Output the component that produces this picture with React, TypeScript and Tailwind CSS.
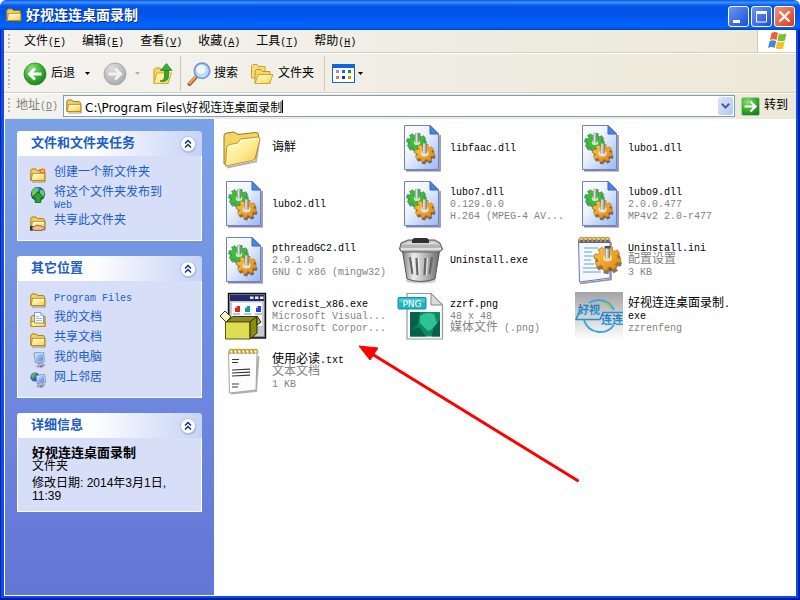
import { ReactNode, useState } from "react";

const gear = (cx: number, cy: number, r: number, teeth = 8, squash = 0.9) => {
  const pts: string[] = [];
  const step = (Math.PI * 2) / teeth;
  for (let i = 0; i < teeth; i++) {
    const a = i * step + 0.2;
    [[-0.34, 0.76], [-0.24, 1], [0.24, 1], [0.34, 0.76]].forEach(([o, k]) => {
      const t = a + o * step;
      pts.push(`${(cx + Math.cos(t) * r * k).toFixed(2)},${(cy + Math.sin(t) * r * k * squash).toFixed(2)}`);
    });
  }
  return pts.join(" ");
};

/* half-width characters are set smaller so that two of them fill one chinese cell */
function Mixed({ text }: { text: string }) {
  const parts = text.split(/([\x20-\x7e]+)/).filter(Boolean);
  return (
    <>
      {parts.map((p, i) =>
        /^[\x20-\x7e]+$/.test(p) ? <span key={i} className="text-[10px] leading-none whitespace-pre-wrap">{p}</span> : p
      )}
    </>
  );
}

function Defs() {
  return (
    <svg className="absolute size-0" aria-hidden="true">
      <defs>
        <linearGradient id="folder" x1="0" y1="0" x2="1" y2="1">
          <stop offset="0" stopColor="#fffbd0" />
          <stop offset="0.5" stopColor="#ffec94" />
          <stop offset="1" stopColor="#f2c94e" />
        </linearGradient>
        <linearGradient id="page" x1="0" y1="0" x2="1" y2="1">
          <stop offset="0" stopColor="#ffffff" />
          <stop offset="0.4" stopColor="#eef4ff" />
          <stop offset="1" stopColor="#98b8f8" />
        </linearGradient>
        <radialGradient id="green" cx="0.35" cy="0.25" r="0.85">
          <stop offset="0" stopColor="#8ee07a" />
          <stop offset="0.5" stopColor="#3cb034" />
          <stop offset="1" stopColor="#157a18" />
        </radialGradient>
        <radialGradient id="grey" cx="0.35" cy="0.25" r="0.9">
          <stop offset="0" stopColor="#dcdcdc" />
          <stop offset="1" stopColor="#a4a4a4" />
        </radialGradient>
        <linearGradient id="metal">
          <stop offset="0" stopColor="#808080" />
          <stop offset="0.3" stopColor="#ececec" />
          <stop offset="0.65" stopColor="#b0b0b0" />
          <stop offset="1" stopColor="#6c6c6c" />
        </linearGradient>
        <linearGradient id="gold" x1="0" y1="0" x2="1" y2="1">
          <stop offset="0" stopColor="#ffc84a" />
          <stop offset="1" stopColor="#dd8510" />
        </linearGradient>
        <linearGradient id="screen" x1="0" y1="0" x2="1" y2="1">
          <stop offset="0" stopColor="#d4ecff" />
          <stop offset="1" stopColor="#3a7fe8" />
        </linearGradient>
        <linearGradient id="plate" x1="0" y1="0" x2="0" y2="1">
          <stop offset="0" stopColor="#a4a4a4" />
          <stop offset="1" stopColor="#ffffff" />
        </linearGradient>
        <linearGradient id="brand" x1="0" y1="0" x2="0" y2="1">
          <stop offset="0" stopColor="#1766b4" />
          <stop offset="1" stopColor="#2aa4e2" />
        </linearGradient>
      </defs>
    </svg>
  );
}

function SmallFolder({ children }: { children?: ReactNode }) {
  return (
    <svg viewBox="0 0 16 16" className="size-4 shrink-0">
      <path d="M2 15h13V6" fill="none" stroke="#6b5a20" strokeWidth="1" opacity=".6" />
      <path d="M.8 13.5V3.2L2 2h4l1.4 1.6h6l.9 1V13.5z" fill="#f5d060" stroke="#a57a12" />
      <path d="M1.2 13.5 2.4 6.4h12.4v7.1z" fill="url(#folder)" stroke="#b98c1c" />
      <path d="M3 7.4h11" stroke="#fffde4" />
      {children}
    </svg>
  );
}

function NewFolderIcon() {
  return (
    <SmallFolder>
      <path d="m12.5 0 .8 2.2L16 2l-1.4 2L16 6l-2.6-.4-1 2-.9-2L9 6l1.3-2L9 2l2.6.2z" fill="#f26a28" />
      <circle cx="12.5" cy="3.9" r="1.2" fill="#ffd040" />
    </SmallFolder>
  );
}

function PublishIcon() {
  return (
    <svg viewBox="0 0 16 16" className="size-4 shrink-0">
      <circle cx="8" cy="7" r="6.8" fill="#2866c8" stroke="#123f86" strokeWidth=".6" />
      <path d="M2 4c2-3 5-3.4 6-3l1 2-2 2-2 3-3 1zM10 3l3 0 1.5 3-1 4-2-1-1.5-3z" fill="#6cc85a" />
      <path d="m8 5 6 6h-3.2v4.5H5.2V11H2z" fill="#2fa32c" stroke="#0f5e12" strokeWidth=".8" />
    </svg>
  );
}

function ShareIcon() {
  return (
    <SmallFolder>
      <path d="M0 11.5h4l3-1.5 6 1.5 2 2-4 2H6L3 15H0z" fill="#f2b98c" stroke="#7a4a20" strokeWidth=".8" />
      <path d="M0 11h2.5v4.5H0z" fill="#333" />
    </SmallFolder>
  );
}

function DocsIcon() {
  return (
    <svg viewBox="0 0 16 16" className="size-4 shrink-0">
      <path d="M1 14.5V5l1.5-1.5H14L15 5v9.5z" fill="#f5d060" stroke="#a57a12" />
      <path d="M4.5.5h6l3 3v8h-9z" fill="#fff" stroke="#5f86c8" strokeWidth=".8" />
      <path d="M10.5.5v3h3M6 4.5h3M6 6.5h6M6 8.5h6" fill="none" stroke="#74b2e8" strokeWidth=".8" />
      <path d="M1 14.5V9.5h3l.8 1.5H15v3.5z" fill="url(#folder)" stroke="#b98c1c" />
    </svg>
  );
}

function ComputerIcon({ net }: { net?: boolean }) {
  return (
    <svg viewBox="0 0 16 16" className="size-4 shrink-0">
      {net && (
        <g>
          <circle cx="5" cy="5" r="4.6" fill="#2c66c4" />
          <path d="M1 4c1-3 4-3.5 5-3L5 4 3 7zM6 6l3-2v4z" fill="#55bb48" />
        </g>
      )}
      <path d={net ? "M6 3.5 14.5 2.5 15.5 10.5 7.5 12z" : "M4 1 13.5 0 14.5 9.5 5.5 11z"} fill="#dfe3ee" stroke="#7482a8" strokeWidth=".8" />
      <path d={net ? "M7.2 4.5 13.6 3.7 14.3 9.6 8.3 10.7z" : "M5.2 2.2 12.6 1.4 13.3 8.6 6.5 9.7z"} fill="url(#screen)" />
      <path d="m8.5 11 4-.8.8 2 1.7 1-3.5 2.3-5-1 1.7-1.2z" fill="#b4b7c8" stroke="#777c98" strokeWidth=".6" />
      <path d="m10 14.5 2.5-.9" stroke="#7048a0" />
    </svg>
  );
}

function CircleArrow({ muted }: { muted?: boolean }) {
  return (
    <svg viewBox="0 0 24 24" className="size-6 shrink-0">
      <circle cx="12" cy="12" r="11" fill={muted ? "url(#grey)" : "url(#green)"} stroke={muted ? "#a0a0a0" : "#2c8a2a"} strokeWidth=".8" />
      <path
        d={muted ? "M5.5 12h12M12 6.5l5.7 5.5-5.7 5.5" : "M18.5 12h-12M12 6.5 6.3 12l5.7 5.5"}
        fill="none"
        stroke={muted ? "#f2f2f2" : "#fff"}
        strokeWidth="2.8"
      />
    </svg>
  );
}

function UpIcon() {
  return (
    <svg viewBox="0 0 20 24" className="w-5 h-6 shrink-0">
      <path d="M1 21.5V7.5l1.5-1.5H7l1.5 2H15v13.5z" fill="#f5d568" stroke="#c39a22" />
      <path d="M1 21.5 4 11h14.5L15 21.5z" fill="url(#folder)" stroke="#d6ab2c" />
      <path d="M7 19c3.5-.5 4.5-2 4.5-5V8h4v6c0 4-3.5 6.5-8.5 5z" fill="#35a52f" stroke="#1c7a1c" strokeWidth=".7" />
      <path d="M7.5 8.5 13.5 1.5 19 8.5z" fill="#3bb035" stroke="#1c7a1c" strokeWidth=".7" />
    </svg>
  );
}

function SearchIcon() {
  return (
    <svg viewBox="0 0 24 24" className="size-6 shrink-0">
      <path d="m2.5 22 7-7.5" stroke="#a85a20" strokeWidth="4" strokeLinecap="round" />
      <path d="m2.5 21.3 6.5-7" stroke="#f6a860" strokeWidth="2" strokeLinecap="round" />
      <circle cx="15" cy="8.8" r="7.7" fill="#b8dcff" stroke="#7394cc" strokeWidth="1.6" />
      <circle cx="14" cy="7.5" r="4.5" fill="#eef8ff" />
    </svg>
  );
}

function FoldersIcon() {
  return (
    <svg viewBox="0 0 24 24" className="size-6 shrink-0">
      <path d="M1.5 16V4L3 2.5h4L8.5 4.5H15V16z" fill="#f8dc78" stroke="#c9a02a" />
      <path d="M5 21.5V9l1.5-1.5h4.5l1.5 2h7.5v12z" fill="#f5d568" stroke="#c39a22" />
      <path d="m5 21.5 3.5-9h14.5l-3.5 9z" fill="url(#folder)" stroke="#d0a52a" />
    </svg>
  );
}

function ViewIcon() {
  const dots = ["#9a98c8", "#2f66d8", "#0b9a1a", "#f07848", "#0c3a9c", "#c8a010"];
  return (
    <svg viewBox="0 0 24 20" className="w-6 h-5 shrink-0">
      <rect x=".5" y=".5" width="22" height="18" fill="#fff" stroke="#1664d8" />
      <path d="M0 0h23v4H0z" fill="#0f66e0" />
      {dots.map((c, i) => (
        <rect key={i} x={4 + (i % 3) * 6} y={6 + Math.floor(i / 3) * 6} width="3" height="3" fill={c} />
      ))}
    </svg>
  );
}

function Flag() {
  return (
    <svg viewBox="0 0 20 20" className="size-5">
      <path d="M4.5 2C7 .6 9 .9 11 2L9.4 9C7.5 8 5.5 7.8 3 9z" fill="#f0602c" />
      <path d="M12 2.5c2.5 1.2 4.5 1 7.5 0L18 9.4c-2.8 1-5 1-7.6 0z" fill="#7cbf32" />
      <path d="M2.7 10c2.5-1.2 4.5-1 6.5 0l-1.6 7c-2-1.2-4-1.2-6.6 0z" fill="#3f8ae0" />
      <path d="M10.2 10.5c2.5 1.2 4.8 1 7.5 0l-1.6 6.9c-2.8 1.2-5 1-7.5-.2z" fill="#fcc020" />
    </svg>
  );
}

function BigFolder() {
  return (
    <svg viewBox="0 0 48 48" className="size-12">
      <path d="M8 43.5 37 37.5 40 17" fill="none" stroke="#000" strokeWidth="2" opacity=".3" />
      <path d="M5 40V12q0-2.5 2-2.8L15 8l4 2.5 17.5-2q3-.2 3 2.5V16L36 35z" fill="#f4d568" stroke="#9c7814" />
      <path d="M6.5 42 7.5 24q.2-3 3-3.5l8-1.5 3-4 17-2q2.8-.2 2.5 2L36.5 33q-.5 3-3 3.5z" fill="url(#folder)" stroke="#bd942a" />
      <path d="m8.8 23.5 10.5-3 3-4 17-2" fill="none" stroke="#fffee8" />
    </svg>
  );
}

function DllIcon() {
  return (
    <svg viewBox="0 0 48 48" className="size-12">
      <path d="M9 46.7h34V11" fill="none" stroke="#23264e" strokeWidth="1.6" opacity=".55" />
      <path d="M7.5 1.5H33l8.5 8.5v35.5h-34z" fill="url(#page)" stroke="#6f80c8" />
      <path d="M33 1.5 41.5 10H33z" fill="#3f88ea" stroke="#3f64b8" />
      <polygon points={gear(19.5, 19, 10)} transform="translate(1 1.5)" fill="#1d5a2a" opacity=".6" />
      <polygon points={gear(19.5, 18, 10)} fill="#3fba3c" stroke="#238828" strokeWidth=".6" />
      <ellipse cx="20" cy="18.5" rx="3.2" ry="2.6" fill="#c9e8cc" />
      <path d="M18 9h4v9.5h-4z" fill="url(#metal)" />
      <polygon points={gear(27.5, 30, 10)} transform="translate(1 1.5)" fill="#5c3a10" opacity=".7" />
      <polygon points={gear(27.5, 29, 10)} fill="url(#gold)" stroke="#b87012" strokeWidth=".6" />
      <ellipse cx="27.5" cy="29.5" rx="4" ry="3" fill="#e6e4e0" />
      <path d="M25.5 19.5h4.2v10h-4.2z" fill="url(#metal)" />
    </svg>
  );
}

function TrashIcon() {
  return (
    <svg viewBox="0 0 48 48" className="size-12">
      <ellipse cx="24" cy="45" rx="15" ry="2.5" fill="#000" opacity=".2" />
      <path d="M5.5 15h37L38 43q-14 5-28 0z" fill="url(#metal)" stroke="#555" />
      <path d="m13 21 2.5 17M19.5 22l1 17M28.5 22l-1 17M35 21l-2.5 17" stroke="#666" strokeWidth="2.2" />
      <path d="m14.8 21 2.5 17M21.5 22l1 17M30.5 22l-1 17" stroke="#f2f2f2" strokeWidth="1" />
      <path d="M2.5 13 4 7l7-3h27l5 3 2.5 6q-1 3-5 3H7q-4 0-4.5-3z" fill="#b4b4b4" stroke="#5a5a5a" />
      <path d="M5 8.5 11.5 5.5h26l5 3z" fill="#d8d8d8" />
      <path d="M4 13h40" stroke="#eee" strokeWidth="1.6" />
      <path d="M15 7V4l2-2h13l2 2v3z" fill="#303030" />
    </svg>
  );
}

function Spiral({ n, x, gap }: { n: number; x: number; gap: number }) {
  return (
    <>
      {Array.from({ length: n }).map((_, i) => (
        <path key={i} d={`M${x + i * gap} 6q-2-4 1-4.5t2.5 4`} fill="none" stroke="#c89c1c" strokeWidth="1.5" />
      ))}
    </>
  );
}

function IniIcon() {
  return (
    <svg viewBox="0 0 48 48" className="size-12">
      <path d="M5 47.5 36 43.5V6" fill="none" stroke="#23264e" strokeWidth="1.6" opacity=".5" />
      <path d="M3.5 4H35v38L4.5 46z" fill="#f3f9ff" stroke="#6976bc" />
      <path d="M4 4h31v3H4z" fill="#585cb0" />
      <path d="M9 12h14M9 16h8M9 20h10M9 24h7M9 28h10M8 32h14M8 36h18" stroke="#6d9bd6" />
      <Spiral n={7} x={5} gap={4.3} />
      <polygon points={gear(32.5, 24, 13.5)} transform="translate(1 2)" fill="#5c3a10" opacity=".7" />
      <polygon points={gear(32.5, 22.5, 13.5)} fill="url(#gold)" stroke="#b87012" strokeWidth=".8" />
      <ellipse cx="32.5" cy="22" rx="4.5" ry="3.5" fill="#f0dca8" />
      <path d="M30 11h5v11h-5z" fill="url(#metal)" />
      <path d="M29.5 10h6v2.5h-6z" fill="#45506c" />
    </svg>
  );
}

function TxtIcon() {
  return (
    <svg viewBox="0 0 48 48" className="size-12">
      <path d="M12 45.5 37 43 39.5 8" fill="none" stroke="#000" strokeWidth="2" opacity=".3" />
      <path d="M9.5 5H38l-1 37-26.5 3z" fill="#fdfdfd" stroke="#a4a4ac" />
      <path d="M13 11.5h7M13 14.5h6M13 22l18-.8M13 25l18-.8M13 28l18-.8M13 36h7M13 39h6" stroke="#3a3a44" strokeWidth="1.2" />
      <Spiral n={7} x={11} gap={4} />
    </svg>
  );
}

function InstallerIcon() {
  return (
    <svg viewBox="0 0 48 48" className="size-12">
      <path d="M9.5 1.5h37V46h-37z" fill="#909098" stroke="#101018" strokeWidth="1.4" />
      <path d="M11 3h34v41H11z" fill="#c8c8d0" />
      <path d="M11 3h34v6H11z" fill="#24286e" />
      <path d="M31 4.5h3.5V7H31zM36 4.5h3.5V7H36zM41 4.5h3.5V7H41z" fill="#e8e8f8" />
      <path d="M13 10.5h30V34H13z" fill="#fff" />
      <path d="M16 14h5v6h-5z" fill="#e02424" />
      <path d="M26 14h5v6h-5z" fill="#169aa0" />
      <path d="M37 14h5v6h-5z" fill="#1c44e0" />
      <path d="M16 14h2v2h-2zM26 14h2v2h-2zM37 14h2v2h-2z" fill="#fff" opacity=".7" />
      <path d="M14 22h7M25 22h7M36 22h7" stroke="#888" />
      <path d="m1 24 5-5 6 6-5 5z" fill="#f4f4c8" stroke="#3c3c10" />
      <path d="m7 30 7-5.5h24L31 30z" fill="#8a8a30" stroke="#3c3c10" />
      <path d="M6.5 30H31v17H6.5z" fill="#dede50" stroke="#5a5a10" />
      <path d="m31 30 7-6v17l-7 6z" fill="#8c8c10" stroke="#2c2c08" />
      <path d="m38 24 4 6-4 3z" fill="#b4b430" stroke="#2c2c08" />
    </svg>
  );
}

function PngIcon() {
  return (
    <svg viewBox="0 0 48 48" className="size-12">
      <path d="M10 1.5h24L45.5 13v34H10z" fill="#fbfbfb" stroke="#9b9b9b" strokeWidth="1.2" />
      <path d="M34 1.5V13h11.5z" fill="#dadada" stroke="#8b8b8b" />
      <path d="M13 20h30v24.5H13z" fill="#0c8a62" />
      <path d="M13 20h10l-3 14-7 4z" fill="#0a5f48" />
      <path d="M23 24q6-5 14-2l4 12-10 5-8-8z" fill="#2cc492" />
      <path d="m13 38 9-3 7 9.5H13zM36 36l7-8v16.5h-8z" fill="#06604a" />
      <rect x="1" y="5.5" width="28" height="11.5" rx="1" fill="#1eb4c0" stroke="#13919e" />
      <path d="M2 6.5h26v4H2z" fill="#5ad4da" opacity=".7" />
      <text x="15" y="15" textAnchor="middle" className="font-['DejaVu_Sans'] text-[9px]" fill="#fff">PNG</text>
    </svg>
  );
}

function AppLogo() {
  return (
    <svg viewBox="0 0 48 48" className="size-12">
      <path d="M0 0h48v48H0z" fill="url(#plate)" />
      <path d="M14 11A17 17 0 0 1 39 18M39 33A17 17 0 0 1 9 28" fill="none" stroke="#3aa6e4" strokeWidth="2" />
      <path d="M27 11q7 0 9 6" fill="none" stroke="#a4cc48" strokeWidth="2" />
      <path d="M5 18 1 27.5h24l3-7h20" fill="none" stroke="#2390d4" strokeWidth="1.6" />
      <text x="3" y="21.5" className="font-['Noto_Sans_CJK_SC'] font-bold text-[11px]" fill="url(#brand)">好视</text>
      <text x="26" y="32" className="font-['Noto_Sans_CJK_SC'] font-bold text-[11px]" fill="url(#brand)">连连</text>
    </svg>
  );
}

function Caret({ muted }: { muted?: boolean }) {
  return (
    <svg viewBox="0 0 5 3" className="w-[5px] h-[3px] shrink-0">
      <path d="M0 0h5L2.5 3z" fill={muted ? "#b5b2a4" : "#000"} />
    </svg>
  );
}

function Grip() {
  return <span className="w-[2px] self-stretch my-1 shrink-0 bg-[repeating-linear-gradient(180deg,#bdb9a6_0_2px,transparent_2px_4px)]" />;
}

const menus = [["文件", "F"], ["编辑", "E"], ["查看", "V"], ["收藏", "A"], ["工具", "T"], ["帮助", "H"]];

const files: { name: string; ext?: string; info?: string[]; icon: ReactNode }[] = [
  { name: "诲觧", icon: <BigFolder /> },
  { name: "libfaac.dll", icon: <DllIcon /> },
  { name: "lubo1.dll", icon: <DllIcon /> },
  { name: "lubo2.dll", icon: <DllIcon /> },
  { name: "lubo7.dll", info: ["0.129.0.0", "H.264 (MPEG-4 AV..."], icon: <DllIcon /> },
  { name: "lubo9.dll", info: ["2.0.0.477", "MP4v2 2.0-r477"], icon: <DllIcon /> },
  { name: "pthreadGC2.dll", info: ["2.9.1.0", "GNU C x86 (mingw32)"], icon: <DllIcon /> },
  { name: "Uninstall.exe", icon: <TrashIcon /> },
  { name: "Uninstall.ini", info: ["配置设置", "3 KB"], icon: <IniIcon /> },
  { name: "vcredist_x86.exe", info: ["Microsoft Visual...", "Microsoft Corpor..."], icon: <InstallerIcon /> },
  { name: "zzrf.png", info: ["48 x 48", "媒体文件 (.png)"], icon: <PngIcon /> },
  { name: "好视连连桌面录制.", ext: "exe", info: ["zzrenfeng"], icon: <AppLogo /> },
  { name: "使用必读.txt", info: ["文本文档", "1 KB"], icon: <TxtIcon /> },
];

function Panel({ title, children }: { title: string; children: ReactNode }) {
  const [open, setOpen] = useState(true);
  return (
    <section>
      <h2 className="flex items-center justify-between h-[25px] pl-[14px] pr-1 rounded-t-[3px] bg-linear-to-r from-white from-40% to-[#c6d3f7] text-[13px] font-bold text-[#215dc6]">
        {title}
        <button type="button" aria-label={title} onClick={() => setOpen(!open)} className="size-5">
          <svg viewBox="0 0 20 20" className="size-5">
            <circle cx="10.5" cy="11" r="8" fill="#8fa2d4" opacity=".6" />
            <circle cx="10" cy="10" r="7.5" fill="#fff" stroke="#b6c2e2" />
            <path d="m7 9.5 3-3 3 3M7 13.5l3-3 3 3" fill="none" stroke="#0c2f8c" strokeWidth="1.5" />
          </svg>
        </button>
      </h2>
      {open && <div className="border border-t-0 border-white bg-[#d6dff7]">{children}</div>}
    </section>
  );
}

function SideLink({ icon, children }: { icon: ReactNode; children: ReactNode }) {
  return (
    <li>
      <a href="#" className="flex items-start gap-2 min-h-4 text-[#215dc6] leading-[12px]">
        {icon}
        <span>{children}</span>
      </a>
    </li>
  );
}

export default function App() {
  const [path, setPath] = useState("C:\\Program Files\\好视连连桌面录制");

  return (
    <div className="min-h-screen flex flex-col rounded-t-md overflow-hidden font-['Liberation_Mono','Noto_Sans_CJK_SC',monospace] text-[12px] leading-[12px] text-black">
      <Defs />
      <header className="flex items-center h-[30px] pl-[6px] pr-[5px] gap-1 bg-[linear-gradient(180deg,#0a58e0_0%,#3c90ff_8%,#0055e6_20%,#0054e8_50%,#0064fc_85%,#0060f6_92%,#0040c8_100%)]">
        <SmallFolder />
        <h1 className="flex-1 pt-[2px] text-[14px] leading-[20px] font-bold text-white [text-shadow:1px_1px_#0a2a80]">好视连连桌面录制</h1>
        <div className="flex gap-[2px] pt-[2px]">
          <button type="button" aria-label="最小化" className="size-[21px] rounded-[3px] border border-white bg-linear-to-br from-[#6c94f4] to-[#1c4cd8]">
            <svg viewBox="0 0 19 19"><path d="M4 13h7v3H4z" fill="#fff" /></svg>
          </button>
          <button type="button" aria-label="最大化" className="size-[21px] rounded-[3px] border border-white bg-linear-to-br from-[#6c94f4] to-[#1c4cd8]">
            <svg viewBox="0 0 19 19"><path d="M4.5 5v10h10V5z" fill="none" stroke="#fff" /><path d="M4 4h11v3H4z" fill="#fff" /></svg>
          </button>
          <button type="button" aria-label="关闭" className="size-[21px] rounded-[3px] border border-white bg-linear-to-br from-[#f09478] to-[#d8340c]">
            <svg viewBox="0 0 19 19"><path d="m4.5 4.5 10 10M14.5 4.5l-10 10" stroke="#fff" strokeWidth="2.2" /></svg>
          </button>
        </div>
      </header>

      <div className="flex-1 flex flex-col pl-[3px] pr-[2px] pb-[2px] border-l border-r-2 border-b-2 border-[#001ea8] bg-[#0b4fe8]">
        <div className="bg-linear-to-r from-[#f4f3f0] to-[#ece9d8]">
          <nav className="flex items-stretch h-[23px] pl-1 border-b border-[#d6d0b8]">
            <Grip />
            <ul className="flex flex-1 items-center pl-[6px] pt-[2px]">
              {menus.map(([name, key]) => (
                <li key={key}>
                  <button type="button" className="px-2">
                    {name}
                    <span className="text-[10px] leading-none">(<u>{key}</u>)</span>
                  </button>
                </li>
              ))}
            </ul>
            <div className="flex items-center justify-center w-[39px] border-l border-[#cfcab4] bg-white">
              <Flag />
            </div>
          </nav>

          <div className="flex items-center h-[40px] pl-1 pt-px border-t border-b border-t-white border-b-[#d6d0b8]">
            <Grip />
            <button type="button" className="flex items-center gap-1 pl-[13px]">
              <CircleArrow />
              后退
            </button>
            <button type="button" aria-label="后退列表" className="pl-[10px] pr-[13px]"><Caret /></button>
            <button type="button" aria-label="前进" disabled><CircleArrow muted /></button>
            <button type="button" aria-label="前进列表" disabled className="pl-2 pr-[13px]"><Caret muted /></button>
            <button type="button" aria-label="向上"><UpIcon /></button>
            <span className="w-px h-[35px] ml-[7px] mr-[6px] bg-[#cdc8b0]" />
            <button type="button" className="flex items-center gap-[3px]">
              <SearchIcon />
              搜索
            </button>
            <button type="button" className="flex items-center gap-1 pl-3">
              <FoldersIcon />
              文件夹
            </button>
            <span className="w-px h-[35px] ml-[10px] mr-[7px] bg-[#cdc8b0]" />
            <button type="button" aria-label="查看" className="flex items-center gap-[2px]">
              <ViewIcon />
              <Caret />
            </button>
          </div>

          <div className="flex items-center h-[25px] pl-1 pr-2 border-t border-t-white">
            <Grip />
            <label htmlFor="address" className="pl-[6px] pr-[5px] text-[#84827a]">
              地址<span className="text-[10px] leading-none">(<u>D</u>)</span>
            </label>
            <div className="flex flex-1 items-center h-[22px] pl-[2px] pr-px bg-white border border-[#7f9db9]">
              <SmallFolder />
              <input
                id="address"
                value={path}
                onChange={(e) => setPath(e.target.value)}
                className="ml-[3px] max-w-full [field-sizing:content] outline-none font-['DejaVu_Sans','Noto_Sans_CJK_SC',sans-serif] text-[12px]"
              />
              <span className="w-px h-[13px] bg-black" />
              <button type="button" aria-label="地址列表" className="ml-auto flex items-center justify-center w-[15px] h-[18px] rounded-[2px] bg-linear-to-br from-[#dbe5fd] to-[#b4c8f6]">
                <svg viewBox="0 0 9 6" className="w-[9px] h-[6px]"><path d="m.8.8 3.7 3.7L8.2.8" fill="none" stroke="#4d6185" strokeWidth="2" /></svg>
              </button>
            </div>
            <button type="button" className="flex items-center gap-1 pl-[6px]">
              <svg viewBox="0 0 19 19" className="size-[19px]">
                <rect x=".5" y=".5" width="18" height="18" rx="2" fill="url(#green)" stroke="#a8cfa0" />
                <path d="M3.5 9.5h11M9.5 4.5l5 5-5 5" fill="none" stroke="#fff" strokeWidth="2.2" />
              </svg>
              转到
            </button>
          </div>
        </div>

        <div className="flex flex-1 pt-px border-l border-b border-white bg-[#ece9d8]">
          <aside className="flex flex-col gap-[15px] w-[209px] shrink-0 p-3 bg-linear-to-b from-[#7ba2e7] to-[#6375d6]">
            <Panel title="文件和文件夹任务">
              <ul className="flex flex-col gap-1 pl-3 pr-6 pt-[11px] pb-[9px]">
                <SideLink icon={<NewFolderIcon />}>创建一个新文件夹</SideLink>
                <SideLink icon={<PublishIcon />}><Mixed text="将这个文件夹发布到 Web" /></SideLink>
                <SideLink icon={<ShareIcon />}>共享此文件夹</SideLink>
              </ul>
            </Panel>
            <Panel title="其它位置">
              <ul className="flex flex-col gap-1 pl-3 pt-[11px] pb-[9px]">
                <SideLink icon={<SmallFolder />}><Mixed text="Program Files" /></SideLink>
                <SideLink icon={<DocsIcon />}>我的文档</SideLink>
                <SideLink icon={<SmallFolder />}>共享文档</SideLink>
                <SideLink icon={<ComputerIcon />}>我的电脑</SideLink>
                <SideLink icon={<ComputerIcon net />}>网上邻居</SideLink>
              </ul>
            </Panel>
            <Panel title="详细信息">
              <div className="pl-[14px] pr-6 pt-2 pb-2 font-['Liberation_Sans','Noto_Sans_CJK_SC',sans-serif] leading-[13px]">
                <p className="text-[13px] leading-[14px] font-bold">好视连连桌面录制</p>
                <p>文件夹</p>
                <p className="mt-1">修改日期: 2014年3月1日, 11:39</p>
              </div>
            </Panel>
          </aside>

          <main className="relative flex-1 pl-[5px] pt-px bg-white">
            <ul className="grid grid-cols-[repeat(auto-fill,178px)] auto-rows-[56px]">
              {files.map((f) => (
                <li key={f.name} className="flex items-center gap-[5px]">
                  <span className="shrink-0">{f.icon}</span>
                  <div className="w-[116px]">
                    <p>
                      <Mixed text={f.name} />
                      {f.ext && <><wbr /><Mixed text={f.ext} /></>}
                    </p>
                    {f.info?.map((line) => (
                      <p key={line} className="text-[#848284]"><Mixed text={line} /></p>
                    ))}
                  </div>
                </li>
              ))}
            </ul>
            <svg viewBox="0 0 224 140" className="absolute left-[144px] top-[226px] w-[224px] h-[140px] pointer-events-none">
              <path d="M14 9 219.5 135.5" stroke="#f00" strokeWidth="3" strokeLinecap="round" />
              <path d="M1 1 20 3 12 15z" fill="#f00" stroke="#f00" />
            </svg>
          </main>
        </div>
      </div>
    </div>
  );
}
